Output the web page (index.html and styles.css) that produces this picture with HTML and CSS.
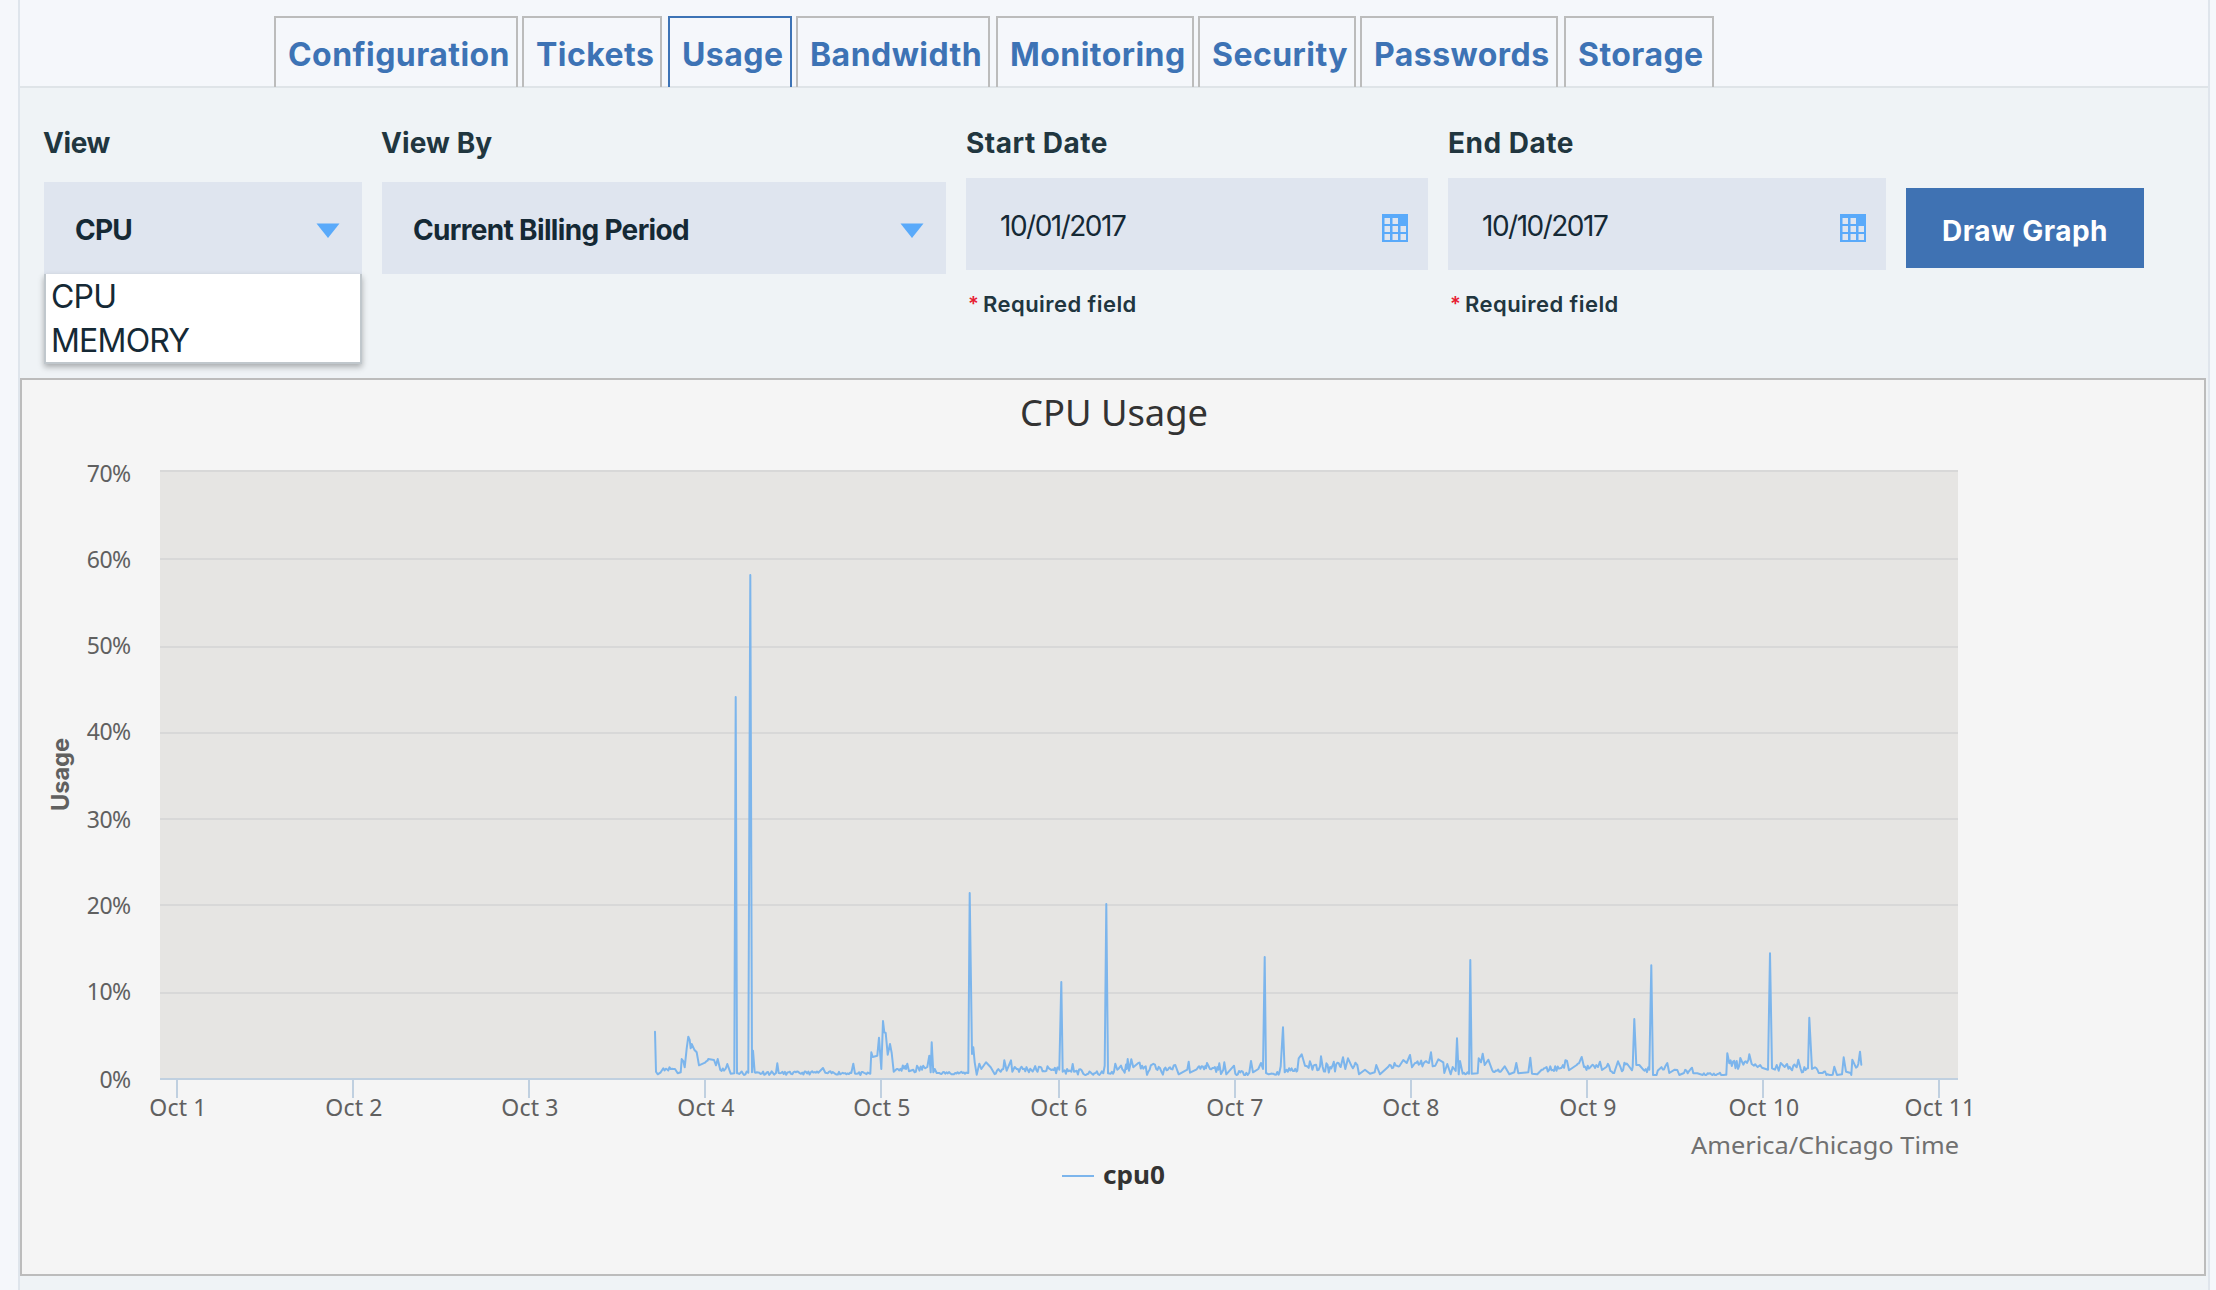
FILE: index.html
```html
<!DOCTYPE html>
<html lang="en">
<head>
<meta charset="utf-8">
<title>Usage</title>
<link rel="stylesheet" href="styles.css">
</head>
<body>
<div class="page">
  <nav class="tabs">
    <a class="tab tab-configuration"><span>Configuration</span></a>
    <a class="tab tab-tickets"><span>Tickets</span></a>
    <a class="tab tab-usage active"><span>Usage</span></a>
    <a class="tab tab-bandwidth"><span>Bandwidth</span></a>
    <a class="tab tab-monitoring"><span>Monitoring</span></a>
    <a class="tab tab-security"><span>Security</span></a>
    <a class="tab tab-passwords"><span>Passwords</span></a>
    <a class="tab tab-storage"><span>Storage</span></a>
  </nav>
  <form class="filters">
    <div class="field">
      <label class="label label-tight">View</label>
      <div class="select">
        <span class="value value-cpu">CPU</span>
        <svg class="arrow" width="24" height="16" viewBox="0 0 24 16"><path d="M0.5 0.5h23L12 15z"/></svg>
        <ul class="menu"><li class="opt-cpu">CPU</li><li class="opt-memory">MEMORY</li></ul>
      </div>
    </div>
    <div class="field">
      <label class="label label-viewby">View By</label>
      <div class="select">
        <span class="value value-period">Current Billing Period</span>
        <svg class="arrow" width="24" height="16" viewBox="0 0 24 16"><path d="M0.5 0.5h23L12 15z"/></svg>
      </div>
    </div>
    <div class="field">
      <label class="label">Start Date</label>
      <div class="date">
        <span class="date-value">10/01/2017</span>
        <svg class="calendar" width="28" height="30" viewBox="0 0 28 30"><path fill-rule="evenodd" d="M1 1h26v28H1zM3.5 5v6h5.500v-6zM11.500 5v6h5.500v-6zM3.500 13v6h5.500v-6zM11.500 13v6h5.500v-6zM19.500 13v6h5.500v-6zM3.500 21v6h5.500v-6zM11.500 21v6h5.500v-6zM19.500 21v6h5.500v-6z"/></svg>
      </div>
      <p class="required"><i>*</i><span>Required field</span></p>
    </div>
    <div class="field">
      <label class="label">End Date</label>
      <div class="date">
        <span class="date-value">10/10/2017</span>
        <svg class="calendar" width="28" height="30" viewBox="0 0 28 30"><path fill-rule="evenodd" d="M1 1h26v28H1zM3.5 5v6h5.500v-6zM11.500 5v6h5.500v-6zM3.500 13v6h5.500v-6zM11.500 13v6h5.500v-6zM19.500 13v6h5.500v-6zM3.500 21v6h5.500v-6zM11.500 21v6h5.500v-6zM19.500 21v6h5.500v-6z"/></svg>
      </div>
      <p class="required"><i>*</i><span>Required field</span></p>
    </div>
    <button class="draw" type="button">Draw Graph</button>
  </form>
  <section class="chart">
    <svg width="2182" height="894" viewBox="22 380 2182 894">
      <rect class="plot" x="160" y="471" width="1798" height="608"/>
      <path class="grid" d="M160 471H1958M160 559H1958M160 647H1958M160 733H1958M160 819H1958M160 905H1958M160 993H1958"/>
      <path class="axis" d="M160 1079H1958M177 1079V1098M353 1079V1098M529 1079V1098M705 1079V1098M881 1079V1098M1059 1079V1098M1235 1079V1098M1411 1079V1098M1587 1079V1098M1763 1079V1098M1939 1079V1098"/>
      <path class="series" id="series"/>
      <text class="title" x="1020" y="426" textLength="188" lengthAdjust="spacingAndGlyphs">CPU Usage</text>
      <g class="tick end">
        <text x="130.500" y="482">70%</text><text x="130.500" y="568">60%</text><text x="130.500" y="654">50%</text><text x="130.500" y="740">40%</text>
        <text x="130.500" y="828">30%</text><text x="130.500" y="914">20%</text><text x="130.500" y="1000">10%</text><text x="130.500" y="1088">0%</text>
      </g>
      <g class="tick middle">
        <text x="178" y="1116">Oct 1</text><text x="354" y="1116">Oct 2</text><text x="530" y="1116">Oct 3</text><text x="706" y="1116">Oct 4</text>
        <text x="882" y="1116">Oct 5</text><text x="1059" y="1116">Oct 6</text><text x="1235" y="1116">Oct 7</text><text x="1411" y="1116">Oct 8</text>
        <text x="1588" y="1116">Oct 9</text><text x="1764" y="1116">Oct 10</text><text x="1940" y="1116">Oct 11</text>
      </g>
      <text class="zone" x="1691" y="1154" textLength="268" lengthAdjust="spacingAndGlyphs">America/Chicago Time</text>
      <text class="ylabel" transform="translate(68.500 811) rotate(-90)" textLength="73" lengthAdjust="spacingAndGlyphs">Usage</text>
      <path class="legend-line" d="M1062 1176H1094"/>
      <text class="legend" x="1103" y="1184" textLength="62" lengthAdjust="spacingAndGlyphs">cpu0</text>
    </svg>
  </section>
</div>
<script src="chart.js"></script>
</body>
</html>
```
FILE: styles.css
```css
* { box-sizing: border-box; margin: 0; padding: 0; }
body { height: 1290px; overflow: hidden; background: #f5f7fb; font-family: Inter, "Liberation Sans", sans-serif; color: #152935; }
.page { margin-left: 18px; width: 2192px; height: 1290px; border: solid #dfe5ec; border-width: 0 2px; background: #eff3f6; }
.tabs { display: flex; height: 88px; padding: 16px 0 0 254px; border-bottom: 2px solid #dfe4e8; background: #f5f7fb; }
.tab { height: 71px; margin-right: 4px; padding: 17px 0 0 12px; border: 2px solid #bcbcbc; border-bottom: 0; color: #3d73b5; font-size: 32px; line-height: 40px; font-weight: 700; letter-spacing: .45px; white-space: nowrap; }
.tab.active { border-color: #3d73b5; }
.tab-configuration { width: 244px; }
.tab-tickets { width: 140px; margin-right: 6px; }
.tab-usage { width: 124px; }
.tab-bandwidth { width: 194px; margin-right: 6px; }
.tab-monitoring { width: 198px; }
.tab-security { width: 158px; }
.tab-passwords { width: 198px; margin-right: 6px; }
.tab-storage { width: 150px; }
.filters { display: grid; grid-template-columns: 318px 564px 462px 438px 238px; column-gap: 20px; height: 290px; padding: 36px 0 0 24px; }
.label { display: block; height: 54px; padding-top: 1px; color: #21363f; font-size: 28px; line-height: 36px; font-weight: 700; letter-spacing: .5px; }
.label-tight { letter-spacing: -.4px; text-indent: -1px; }
.label-viewby { letter-spacing: .1px; text-indent: -1px; }
.select { position: relative; display: flex; align-items: center; justify-content: space-between; height: 92px; margin-top: 4px; padding: 3px 22px 0 31px; background: #dfe5ef; font-size: 28px; font-weight: 700; }
.arrow { margin-top: 2px; fill: #5aaafa; }
.value-cpu { letter-spacing: -.8px; }
.value-period { letter-spacing: -.67px; }
.menu { position: absolute; z-index: 2; top: 92px; left: 0; width: 318px; height: 90px; padding: 1px 0 0 5px; border: 2px solid #c0c7cc; border-top: 0; background: #fff; box-shadow: 0 3px 6px rgba(0,0,0,.3); list-style: none; font-size: 32px; line-height: 44px; font-weight: 400; letter-spacing: -.8px; }
.date { display: flex; align-items: center; justify-content: space-between; height: 92px; padding: 0 19px 0 34px; background: #dfe5ef; font-size: 28px; letter-spacing: -1.5px; }
.date-value { margin-top: 3px; }
.calendar { margin-top: 7px; fill: #5aaafa; }
.required { display: flex; margin-top: 20px; padding-left: 2px; color: #21363f; font-size: 22px; line-height: 28px; font-weight: 600; letter-spacing: .45px; }
.required i { width: 15px; color: #e71d32; font-size: 20px; font-style: normal; }
.draw { height: 80px; margin-top: 64px; border: 0; background: #3f72b3; color: #fff; font: 700 28px/80px Inter, sans-serif; letter-spacing: .45px; padding-top: 3px; }
.chart { width: 2186px; height: 898px; border: 2px solid #bcbcbc; background: #f5f5f5; }
.chart svg { display: block; }
.plot { fill: #e6e5e3; }
.grid { fill: none; stroke: #d8d8d8; stroke-width: 2; }
.axis { fill: none; stroke: #c0d0e0; stroke-width: 2; }
.series { fill: none; stroke: #7cb5ec; stroke-width: 2; stroke-linejoin: round; stroke-linecap: round; }
.title, .tick, .zone, .legend { font-family: "Noto Sans", sans-serif; }
.title { font-size: 37px; fill: #333; }
.tick { font-size: 23px; fill: #606060; }
.end { text-anchor: end; letter-spacing: -.6px; }
.middle { text-anchor: middle; letter-spacing: .2px; }
.zone { font-size: 24px; fill: #707070; }
.ylabel { font-size: 24px; font-weight: 700; fill: #606060; }
.legend { font-size: 25px; font-weight: 700; fill: #333; }
.legend-line { stroke: #7cb5ec; stroke-width: 2; }
```
FILE: chart.js
```javascript
// Each block holds [offset, height, jitter] samples in thirds of a pixel,
// measured from the block start and the 0% line. A jitter value fills the
// span up to the next sample with small load fluctuations.
var blocks = [
  { start: 640, points: [
    [45,142],[48,22],[53,14],[62,20],[70,32,5],[105,30],[113,17],[122,20],[125,60],[130,54],[134,35],[140,92],[145,127],
    [149,117],[152,92],[155,105],[163,88],[170,80],[177,41],[195,49,4],[205,60],[222,57],[228,41],[233,60],[241,27,5],
    [257,31],[262,45],[272,16],[283,17],[287,1146],[291,17],[294,17,6],[325,19],[331,1512],[336,20],[339,85],[344,20],
    [347,19,5],[408,18],[412,47],[416,18],[420,17,4],[535,19],[549,33],[556,19],[560,18,4],[634,18],[640,46],[645,16],
    [650,16,4],[691,16],[694,80],[698,66],[712,70],[717,124],[724,30],[729,174],[733,140],[737,138],[743,73],[750,105],
    [755,78],[761,22],[770,30,9],[798,30],[802,46],[807,23],[820,28,9],[855,32],[862,36],[868,70],[872,20],[875,110],
    [880,20],[884,30],[890,18,3],[985,18],[989,558],[996,75],[1000,95],[1004,50],[1010,13],[1018,46],[1024,30],[1038,50],
    [1052,35],[1060,22,13],[1090,30],[1093,56],[1100,25],[1113,56],[1117,22],[1124,36],[1130,30,9],[1258,28],[1264,291],
    [1268,22],[1274,26,8],[1294,22],[1298,45],[1302,22],[1310,25,8],[1330,16,5],[1390,17],[1394,40],[1399,525],[1404,17],
    [1412,16,4],[1422,22],[1426,46],[1432,28,13],[1460,30],[1463,60],[1467,25]] },
  { start: 1130, points: [
    [0,38],[4,59],[10,35],[25,48,11],[55,22,12],[75,43,10],[95,20,9],[120,35,9],[136,42],[146,14],[172,28],[176,52],
    [180,19],[200,29,7],[228,32],[231,48],[240,30,8],[265,28],[268,47],[273,15],[280,28],[283,50],[289,14],[312,40],
    [316,16,6],[358,19],[363,54],[369,20],[385,30],[393,48],[399,30],[404,366],[408,18],[416,14,5],[448,18],[452,38],
    [459,155],[464,20],[470,28,5],[502,25],[506,62],[515,74],[525,40,12],[570,38],[573,68],[578,36,14],[632,36],[639,65],
    [646,30],[654,62],[665,38,7],[682,42],[687,14],[705,28],[720,16],[734,20],[739,42],[750,14],[765,28],[775,37,9],
    [808,38],[820,57],[830,48],[840,72],[846,35],[855,48,10],[897,48],[903,80],[908,38],[916,40],[925,59],[940,50],
    [943,18],[952,45],[962,14],[968,36],[977,24],[981,122],[986,14],[990,54],[998,16,4],[1017,16],[1021,357],[1025,16],
    [1043,17],[1046,62],[1053,50],[1058,76],[1064,42],[1075,58],[1086,28,6],[1112,22],[1124,38],[1138,14],[1153,20],
    [1159,48],[1165,17],[1195,20],[1201,64],[1206,16],[1222,14],[1235,28,7],[1295,34,8],[1311,54],[1317,26],[1340,42,6],
    [1355,66],[1362,36,8],[1404,36]] },
  { start: 1600, points: [
    [0,52],[6,27],[20,37,9],[45,26],[54,53],[62,34,10],[84,42],[96,26],[98,37],[103,180],[109,42],[118,42],[130,28,6],
    [148,28],[154,341],[159,12],[166,12,10],[196,38],[202,48],[208,18],[224,28],[232,27],[238,12],[252,18,7],[272,30],
    [276,34],[280,17],[292,17],[308,12,5],[376,13],[379,13],[382,77],[388,47,10],[418,40],[421,63],[430,43,14],[448,74],
    [455,45],[462,40,9],[486,34],[504,28],[510,377],[516,32],[525,28],[530,42],[536,25],[542,48],[554,36,8],[590,35],
    [595,58],[602,30,12],[624,32],[628,184],[636,30],[645,35,10],[656,18],[668,18,5],[698,13],[703,37],[711,12],[726,14],
    [731,65],[738,22],[752,18],[754,12],[757,58],[768,34,8],[775,45],[780,82],[784,43]] }
];

var seed = 11;
function random() {
  seed = (seed * 16807) % 2147483647;
  return seed / 2147483647;
}

var path = [];
blocks.forEach(function (block) {
  block.points.forEach(function (p, i) {
    path.push([block.start + p[0] / 3, 1079 - p[1] / 3]);
    var next = block.points[i + 1];
    if (!p[2] || !next) return;
    for (var x = p[0] + 3.7; x < next[0] - 2; x += 3.7) {
      var t = (x - p[0]) / (next[0] - p[0]);
      var h = p[1] + (next[1] - p[1]) * t + (random() * 2 - 1) * p[2] * 1.25;
      path.push([block.start + x / 3, 1079 - Math.max(h, 12) / 3]);
    }
  });
});
document.getElementById('series').setAttribute('d', 'M' + path.map(function (p) {
  return p[0].toFixed(1) + ' ' + p[1].toFixed(1);
}).join('L'));
```
